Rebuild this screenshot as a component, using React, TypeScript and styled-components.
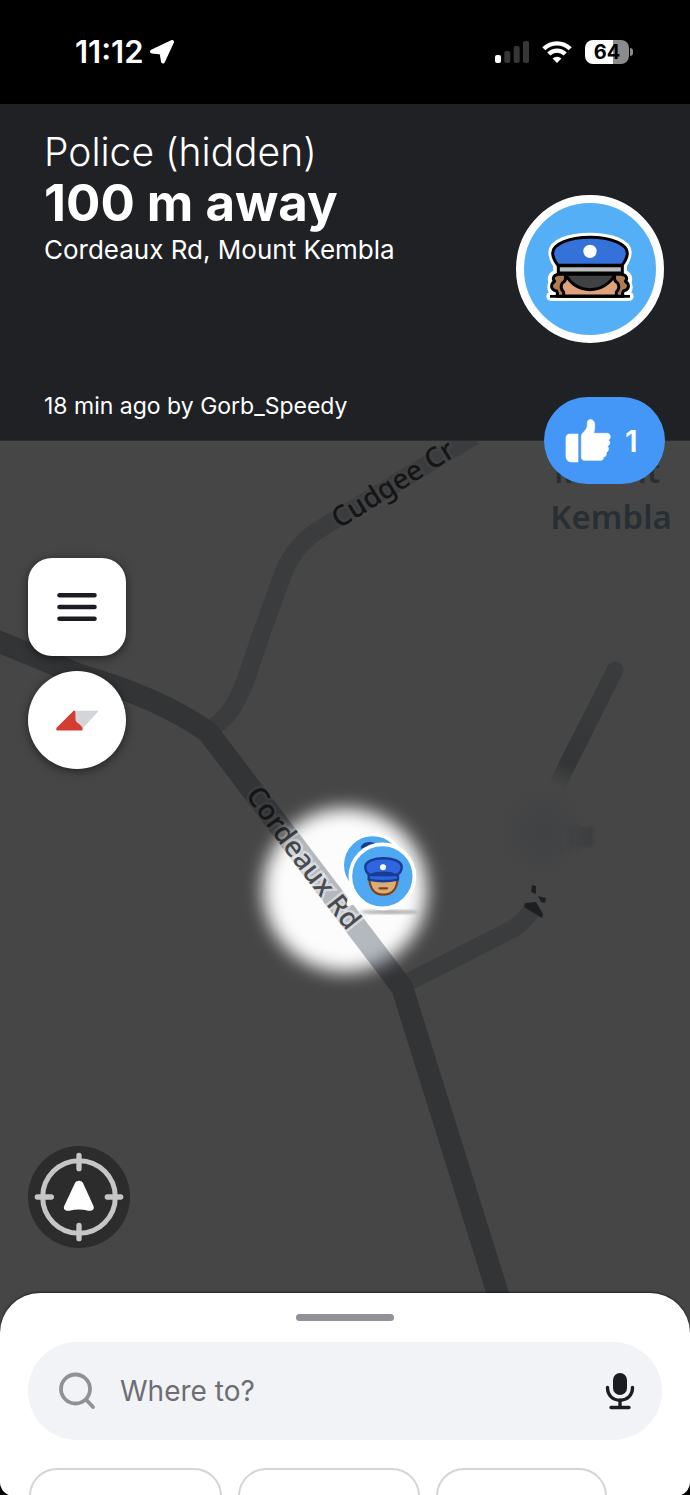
import React from "react";
import styled, { createGlobalStyle } from "styled-components";

const GlobalStyle = createGlobalStyle`
  *, *::before, *::after { box-sizing: border-box; }
  html, body, #root { height: 100%; }
  body {
    margin: 0;
    background: #000;
    font-family: Inter, "Liberation Sans", sans-serif;
    -webkit-font-smoothing: antialiased;
  }
  button { padding: 0; border: 0; font: inherit; cursor: pointer; }
  svg { display: block; }
`;

const Screen = styled.main`
  display: flex;
  flex-direction: column;
  min-height: 100vh;
  overflow: hidden;
`;

const StatusBar = styled.header`
  display: flex;
  justify-content: space-between;
  align-items: center;
  height: 104px;
  padding: 0 61px 0 75px;
  color: #fff;
  background: #000;
`;

const StatusGroup = styled.div<{ $gap: number }>`
  display: flex;
  align-items: center;
  gap: ${(p) => p.$gap}px;
`;

const Clock = styled.time`
  font-size: 31px;
  font-weight: 600;
  line-height: 32px;
`;

const Battery = styled.div`
  position: relative;
  display: flex;
  align-items: center;
  justify-content: center;
  width: 44px;
  height: 24px;
  border-radius: 8px;
  color: #000;
  background: linear-gradient(90deg, #fff 64%, #8b8b8b 64%);
  font-size: 20px;
  font-weight: 700;
  line-height: 24px;

  &::after {
    content: "";
    position: absolute;
    right: -4px;
    top: 8px;
    width: 3px;
    height: 8px;
    border-radius: 0 4px 4px 0;
    background: #8b8b8b;
  }
`;

const Alert = styled.section`
  position: relative;
  z-index: 2;
  display: flex;
  justify-content: space-between;
  align-items: center;
  min-height: 337px;
  padding: 0 26px 6px 44px;
  color: #fff;
  background: #202125;
  border-bottom: 1px solid #2c2d30;
`;

const AlertText = styled.div`
  display: flex;
  flex-direction: column;
  align-self: stretch;
  padding: 22px 0 14px;
`;

const Kind = styled.h1`
  margin: 0;
  font-size: 39px;
  font-weight: 300;
  line-height: 52px;
`;

const Distance = styled.p`
  margin: 0;
  font-size: 51px;
  font-weight: 700;
  line-height: 50px;
`;

const Street = styled.p`
  margin: 0;
  font-size: 26px;
  font-weight: 400;
  line-height: 44px;
`;

const Reporter = styled.p`
  margin: auto 0 0;
  font-size: 23px;
  font-weight: 400;
  line-height: 28px;
`;

const Avatar = styled.div`
  flex: none;
  width: 148px;
  height: 148px;
`;

const LikeButton = styled.button`
  position: absolute;
  right: 25px;
  bottom: -44px;
  display: flex;
  align-items: center;
  gap: 14px;
  width: 121px;
  height: 87px;
  padding-left: 21px;
  border-radius: 44px;
  color: #fff;
  background: #4496f7;
  font-size: 30px;
  font-weight: 600;
`;

const MapArea = styled.section`
  position: relative;
  flex: 1;
  display: flex;
  min-height: 912px;
  background: #464646;
`;

const MapCanvas = styled.svg`
  position: absolute;
  inset: 0;
  width: 100%;
  height: 100%;
`;

const Controls = styled.div`
  position: relative;
  display: flex;
  flex-direction: column;
  gap: 15px;
  padding: 117px 28px 105px;
`;

const MapButton = styled.button<{ $round?: boolean }>`
  display: grid;
  place-items: center;
  width: 98px;
  height: 98px;
  border-radius: ${(p) => (p.$round ? "50%" : "24px")};
  background: #fff;
  box-shadow: 0 2px 10px rgba(0, 0, 0, 0.55);
`;

const RecenterButton = styled.button`
  margin-top: auto;
  display: grid;
  place-items: center;
  width: 102px;
  height: 102px;
  border-radius: 50%;
  background: #2c2c2c;
`;

const Sheet = styled.section`
  position: relative;
  z-index: 3;
  display: flex;
  flex-direction: column;
  align-items: stretch;
  margin-top: -60px;
  padding: 21px 28px 0;
  border-radius: 40px 40px 14px 14px;
  background: #fff;
  box-shadow: 0 -1px 2px rgba(0, 0, 0, 0.5);
`;

const Handle = styled.div`
  align-self: center;
  width: 98px;
  height: 7px;
  margin-bottom: 21px;
  border-radius: 4px;
  background: #909298;
`;

const SearchBar = styled.label`
  display: flex;
  align-items: center;
  gap: 24px;
  height: 98px;
  padding: 0 26px 0 30px;
  border-radius: 49px;
  background: #f2f3f7;
`;

const SearchInput = styled.input`
  flex: 1;
  min-width: 0;
  padding: 0;
  border: 0;
  outline: 0;
  background: transparent;
  color: #202125;
  font: 400 28px/36px Inter, "Liberation Sans", sans-serif;

  &::placeholder { color: #6d6e73; opacity: 1; }
`;

const MicButton = styled.button`
  background: transparent;
`;

const Chips = styled.div`
  display: flex;
  gap: 16px;
  height: 28px;
  margin-top: 28px;
  padding-left: 1px;
  overflow: hidden;
`;

const Chip = styled.button<{ $width: number }>`
  flex: none;
  width: ${(p) => p.$width}px;
  height: 64px;
  border: 2px solid #d3d5d8;
  border-radius: 28px;
  background: #fff;
`;

const LocationArrow = () => (
  <svg width="24" height="24" viewBox="0 0 24 24" aria-hidden="true">
    <path d="M22 2L13 21.500 11.500 12.500 2 11.500z" fill="#fff" stroke="#fff" strokeWidth="4" strokeLinejoin="round" />
  </svg>
);

const Signal = () => (
  <svg width="34" height="22" viewBox="0 0 34 22" aria-hidden="true">
    <rect y="14" width="6" height="8" rx="2" fill="#fff" />
    <g fill="#363636">
      <rect x="9.300" y="10" width="6" height="12" rx="2" />
      <rect x="18.700" y="5" width="6" height="17" rx="2" />
      <rect x="28" y="0" width="6" height="22" rx="2" />
    </g>
  </svg>
);

const Wifi = () => (
  <svg width="30" height="22" viewBox="0 0 30 22" aria-hidden="true">
    <g fill="none" stroke="#fff" strokeWidth="4.400">
      <path d="M1.800 7.800a18.700 18.700 0 0 1 26.400 0" />
      <path d="M6.800 13a11.600 11.600 0 0 1 16.400 0" />
    </g>
    <path d="M15 22l-4.400-4.500a6.200 6.200 0 0 1 8.800 0z" fill="#fff" />
  </svg>
);

const OfficerHidden = () => (
  <svg width="148" height="148" viewBox="48 44 444 444" role="img" aria-label="Police">
    <circle cx="270" cy="266" r="210" fill="#55aff7" stroke="#fff" strokeWidth="24" />
    <path
      d="M158 216c0-27 50-46 112-46s112 19 112 46c0 16-8 28-14 38v26c15 4 19 14 13 28 6 10 5 20-2 28v12H161v-12c-7-8-8-18-2-28-6-14-2-24 13-28v-26c-6-10-14-22-14-38z"
      fill="#fff" stroke="#fff" strokeWidth="26" strokeLinejoin="round"
    />
    <path d="M152 348h236" stroke="#fff" strokeWidth="26" strokeLinecap="round" />
    <g stroke="#000" strokeWidth="9" strokeLinejoin="round">
      <path d="M176 282c-16 3-20 12-12 21-14 10-12 25 6 29 3 5 3 11 0 16h200c-3-5-3-11 0-16 18-4 20-19 6-29 8-9 4-18-12-21z" fill="#b17b50" />
      <path d="M196 288c2 8-2 16-9 20-6 10-3 20 4 27v12h158v-12c7-7 10-17 4-27-7-4-11-12-9-20z" fill="#e0a27d" />
      <path d="M196 282c16 28 42 46 74 46s60-18 76-46z" fill="#3f4142" />
      <path d="M158 218c0-26 48-47 112-47s112 21 112 47c0 16-9 28-16 37H174c-7-9-16-21-16-37z" fill="#3471d8" />
      <path d="M175 256h192v22H175z" fill="#b9babc" />
    </g>
    <path d="M150 348h240" stroke="#000" strokeWidth="8" />
    <circle cx="270" cy="213" r="20" fill="#fff" />
  </svg>
);

const ThumbUp = () => (
  <svg width="46" height="44" viewBox="254 106 138 132" aria-hidden="true">
    <path d="M268 150h26v86h-20c-11 0-18-8-18-18v-56c0-7 5-12 12-12z" fill="#fff" />
    <path d="M303 160c0-8 3-11 8-16 8-8 11-16 10-26-1-14 20-14 22 2 1 12-1 22-3 29h40c12 0 13 17 4 20 7 5 5 16-3 19 6 5 4 16-4 18 3 5 0 15-10 15l2 3c-1 5-4 6-8 6h-48c-7 0-10-4-10-9z" fill="#fff" stroke="#fff" strokeWidth="2" />
  </svg>
);

const MenuIcon = () => (
  <svg width="40" height="30" viewBox="0 0 40 30" aria-hidden="true">
    <path d="M2.500 3.200h35M2.500 15h35M2.500 26.800h35" stroke="#1c1d22" strokeWidth="4.600" strokeLinecap="round" />
  </svg>
);

const CompassIcon = () => (
  <svg width="43" height="21" viewBox="167 508 130 64" aria-hidden="true">
    <path d="M222 512h71l-46 50-24-22z" fill="#d3d5d9" stroke="#d3d5d9" strokeWidth="4" strokeLinejoin="round" />
    <path d="M222 512c4 9-2 20 3 31 6 9 18 13 20 21v4h-75v-4z" fill="#d33d33" stroke="#d33d33" strokeWidth="5" strokeLinejoin="round" />
  </svg>
);

const RecenterIcon = () => (
  <svg width="90" height="90" viewBox="70 64 270 270" aria-hidden="true">
    <circle cx="205" cy="199" r="109" fill="none" stroke="#c6c6c6" strokeWidth="15" />
    <path d="M205 74v40M205 284v40M80 199h42M290 199h40" stroke="#c6c6c6" strokeWidth="16" strokeLinecap="round" />
    <path d="M193 157c5-9 19-9 24 0l31 68c5 11-4 17-15 15-20-5-37-5-57 0-11 2-20-4-15-15z" fill="#fff" />
  </svg>
);

const SearchIcon = () => (
  <svg width="38" height="38" viewBox="0 0 38 38" aria-hidden="true">
    <g fill="none" stroke="#8f9196" strokeWidth="3.800" strokeLinecap="round">
      <circle cx="17.500" cy="17" r="14.500" />
      <path d="M28 27.500l7 7.500" />
    </g>
  </svg>
);

const MicIcon = () => (
  <svg width="32" height="38" viewBox="0 0 32 38" aria-hidden="true">
    <rect x="9" y="1" width="14" height="22" rx="7" fill="#1c1d22" />
    <path d="M3.500 15.500c0 8 5.500 12.700 12.500 12.700s12.500-4.700 12.500-12.700M16 28v7M7 35.500h18" fill="none" stroke="#1c1d22" strokeWidth="3.400" strokeLinecap="round" />
  </svg>
);

const RoadMap = () => (
  <MapCanvas viewBox="0 440 690 912" preserveAspectRatio="xMidYMin slice" role="img" aria-label="Map">
    <defs>
      <filter id="feather" x="-25%" y="-25%" width="150%" height="150%" colorInterpolationFilters="sRGB">
        <feGaussianBlur stdDeviation="9" />
      </filter>
      <mask id="spot" maskUnits="userSpaceOnUse" x="0" y="440" width="690" height="912">
        <rect y="440" width="690" height="912" fill="#fff" />
        <circle cx="345" cy="889" r="82" fill="#000" filter="url(#feather)" />
      </mask>
      <radialGradient id="smudge">
        <stop offset="0" stopColor="#404143" stopOpacity="0.900" />
        <stop offset="0.500" stopColor="#424345" stopOpacity="0.700" />
        <stop offset="1" stopColor="#464646" stopOpacity="0" />
      </radialGradient>
      <linearGradient id="lane" gradientUnits="userSpaceOnUse" x1="615" y1="669" x2="556" y2="786">
        <stop offset="0" stopColor="#ccd4da" />
        <stop offset="0.500" stopColor="#c4cace" />
        <stop offset="0.800" stopColor="#b8bdc2" />
        <stop offset="1" stopColor="#b8bdc2" stopOpacity="0" />
      </linearGradient>
      <linearGradient id="streak">
        <stop offset="0" stopColor="#3a3c3e" stopOpacity="0" />
        <stop offset="1" stopColor="#3a3c3e" stopOpacity="0.900" />
      </linearGradient>
      <filter id="soft"><feGaussianBlur stdDeviation="1.500" /></filter>
      <path id="cudgee-line" d="M339 528Q400 490 470 446" />
      <path id="cordeaux-line" d="M245 794Q294 864 354 939" />
    </defs>

    <rect y="440" width="690" height="912" fill="#fbfcfb" />
    <g fill="none" strokeLinejoin="round">
      <path d="M208 730C230 717 238 699 246 678L264 625 285 568Q297 541 325 525L474 435" stroke="#cfd6db" strokeWidth="18" />
      <path d="M402 984L505 932Q523 924 533 907" stroke="#cfd6db" strokeWidth="18" />
      <path d="M615 669L556 786" stroke="url(#lane)" strokeWidth="17" strokeLinecap="round" />
      <path d="M-10 637L80 674Q158 696 208 731L402 986Q425 1058 502 1306" stroke="#b4b9c0" strokeWidth="22" />
    </g>
    <g fontFamily='"Noto Sans", "Open Sans", sans-serif' paintOrder="stroke" stroke="#fff" strokeOpacity="0.450">
      <text fontSize="28" fontWeight="500" fill="#4a4b50" strokeWidth="5"><textPath href="#cudgee-line">Cudgee Cr</textPath></text>
      <text fontSize="28" fontWeight="500" fill="#4a4b50" strokeWidth="5"><textPath href="#cordeaux-line">Cordeaux Rd</textPath></text>
      <g fontSize="33" fontWeight="600" fill="#8faabc" stroke="none" textAnchor="middle">
        <text x="607" y="482">Mount</text>
        <text x="611" y="528">Kembla</text>
      </g>
    </g>
    <rect y="440" width="690" height="912" fill="#000" fillOpacity="0.720" mask="url(#spot)" />

    <circle cx="543" cy="830" r="54" fill="url(#smudge)" />
    <path d="M560 825L593 826V845L560 848z" fill="url(#streak)" filter="url(#soft)" />
    <g fill="#1e1f21">
      <path d="M525 902l11-1 7 12-1 4-18-11z" />
      <path d="M532 884l4 1v8l-5-2zM538 895l8 2-1 5-4-1z" />
    </g>

    <ellipse cx="389" cy="911" rx="29" ry="2" fill="#666" opacity="0.550" filter="url(#soft)" />
    <g transform="translate(230 770) scale(.333333)">
      <circle cx="428" cy="282" r="91" fill="#4fa9f2" stroke="#fff" strokeWidth="10" />
      <path d="M392 233c0-24 40-24 50-12z" fill="#183c90" />
      <path d="M368 350l-14 50 58-18z" fill="#fff" stroke="#fff" strokeWidth="10" strokeLinejoin="round" />
      <circle cx="457" cy="316" r="96" fill="#4fa9f2" stroke="#fff" strokeWidth="11" />
      <g strokeWidth="7" strokeLinejoin="round">
        <path d="M418 318c0 35 16 53 42 53s43-18 43-53z" fill="#dbac79" stroke="#824216" />
        <path d="M416 312v14c27 6 60 6 88 0v-14z" fill="#2865d8" stroke="#193b92" />
        <path d="M406 288c0-35 109-35 109 0 0 14-6 20-16 24-22-9-56-9-78 0-9-4-15-10-15-24z" fill="#2d66df" stroke="#193b92" />
      </g>
      <path d="M449 352h22" stroke="#824216" strokeWidth="7" strokeLinecap="round" />
      <circle cx="459" cy="289" r="9" fill="#fff" />
    </g>
  </MapCanvas>
);

const chips = [
  { label: "Home", width: 193 },
  { label: "Work", width: 182 },
  { label: "New", width: 171 },
];

export default function App() {
  return (
    <>
      <GlobalStyle />
      <Screen>
        <StatusBar>
          <StatusGroup $gap={6}>
            <Clock>11:12</Clock>
            <LocationArrow />
          </StatusGroup>
          <StatusGroup $gap={13}>
            <Signal />
            <Wifi />
            <Battery>64</Battery>
          </StatusGroup>
        </StatusBar>

        <Alert>
          <AlertText>
            <Kind>Police (hidden)</Kind>
            <Distance>100 m away</Distance>
            <Street>Cordeaux Rd, Mount Kembla</Street>
            <Reporter>18 min ago by Gorb_Speedy</Reporter>
          </AlertText>
          <Avatar>
            <OfficerHidden />
          </Avatar>
          <LikeButton type="button" aria-label="Like, 1">
            <ThumbUp />
            <span>1</span>
          </LikeButton>
        </Alert>

        <MapArea>
          <RoadMap />
          <Controls>
            <MapButton type="button" aria-label="Menu">
              <MenuIcon />
            </MapButton>
            <MapButton type="button" aria-label="Compass" $round>
              <CompassIcon />
            </MapButton>
            <RecenterButton type="button" aria-label="Recenter">
              <RecenterIcon />
            </RecenterButton>
          </Controls>
        </MapArea>

        <Sheet>
          <Handle />
          <SearchBar>
            <SearchIcon />
            <SearchInput type="search" placeholder="Where to?" aria-label="Where to?" />
            <MicButton type="button" aria-label="Voice search">
              <MicIcon />
            </MicButton>
          </SearchBar>
          <Chips>
            {chips.map((chip) => (
              <Chip key={chip.label} type="button" aria-label={chip.label} $width={chip.width} />
            ))}
          </Chips>
        </Sheet>
      </Screen>
    </>
  );
}
